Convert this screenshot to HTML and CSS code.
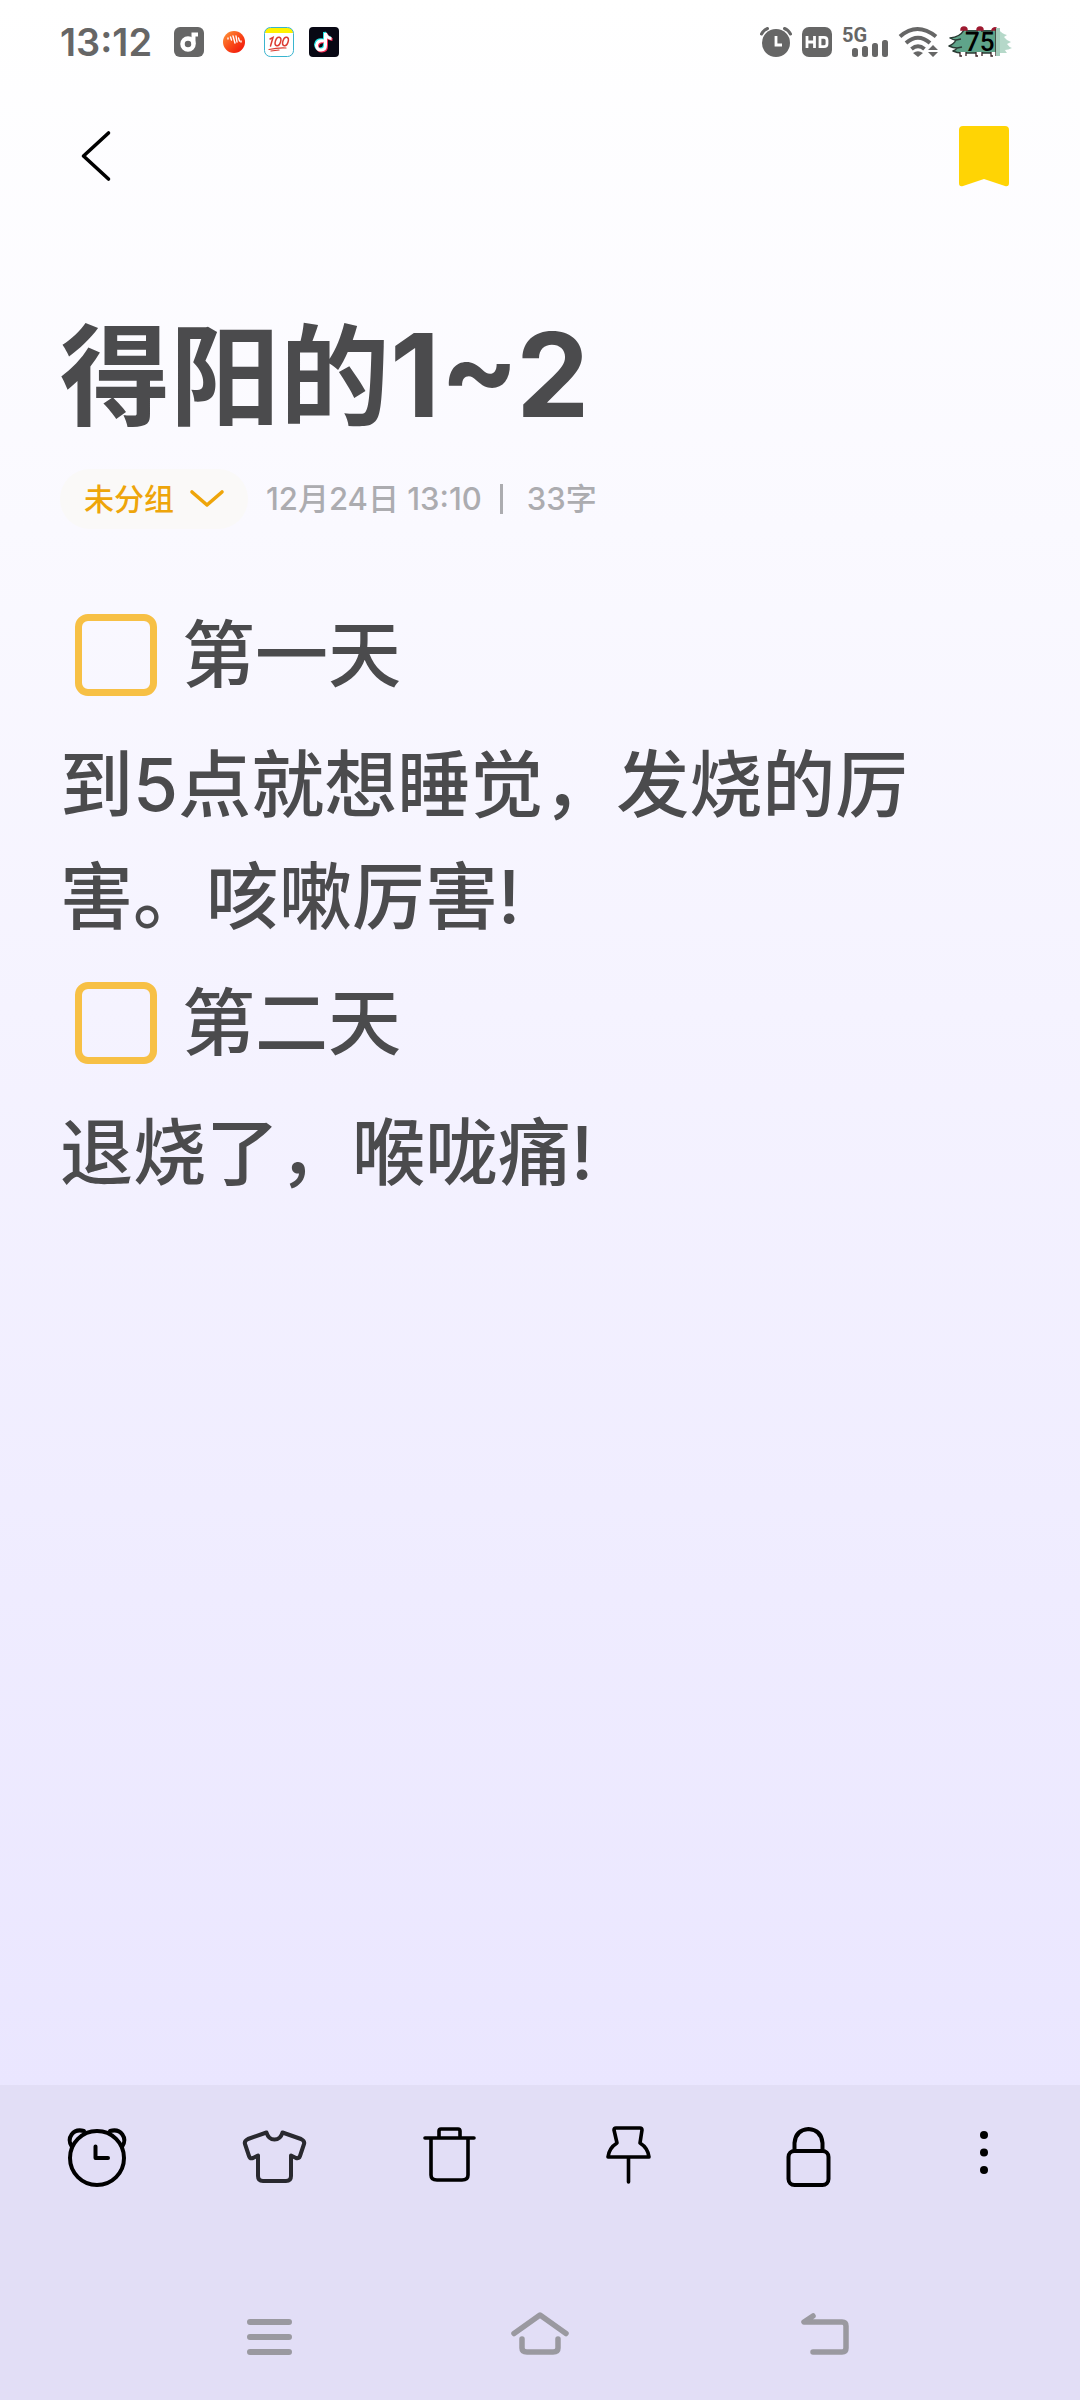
FILE: index.html
```html
<!DOCTYPE html>
<html lang="zh-CN">
<head>
<meta charset="utf-8">
<meta name="viewport" content="width=device-width, initial-scale=1">
<title>得阳的1~2</title>
<link rel="stylesheet" href="styles.css">
</head>
<body>
<div class="screen">
  <div class="status">
    <div class="status-group">
      <span class="clock">13:12</span>
      <div class="apps">
        <svg width="30" height="30" viewBox="0 0 30 30"><rect width="30" height="30" rx="6" fill="#666"/><circle cx="14" cy="17" r="5.500" fill="none" stroke="#fff" stroke-width="4.500"/><path d="M19.500 17V7.500h4.500" fill="none" stroke="#fff" stroke-width="4"/></svg>
        <svg width="30" height="30" viewBox="0 0 30 30"><defs><linearGradient id="orb" x1="0" y1="0" x2="1" y2="1"><stop offset="0" stop-color="#ff9a3c"/><stop offset=".5" stop-color="#f94a18"/><stop offset="1" stop-color="#f00a08"/></linearGradient></defs><circle cx="15" cy="15" r="11" fill="url(#orb)"/><path d="M9 11v1M11.500 10l1 3M14 9l2 7M17 9l1 6M19.500 11l1 3M22 14v1" stroke="#fff" stroke-width="1.400" stroke-linecap="round"/></svg>
        <svg width="30" height="30" viewBox="0 0 30 30"><rect x=".5" y=".5" width="29" height="29" rx="6" fill="#fff"/><path d="M1 6q0-5 5-5h18q5 0 5 5z" fill="#fff200"/><rect x=".5" y=".5" width="29" height="29" rx="6" fill="none" stroke="#39b4cf"/><g fill="none" stroke="#dc3c32" stroke-width="1.500" stroke-linecap="round"><path d="M6 12l3-1.500-2.500 8.500"/><ellipse cx="14" cy="14.500" rx="2.600" ry="4.400" transform="rotate(18 14 14.500)"/><ellipse cx="21.500" cy="14.500" rx="2.600" ry="4.400" transform="rotate(18 21.500 14.500)"/><path d="M5 22.500q9-2 17-1.500M7 24l8-1" stroke-width="1.200"/></g></svg>
        <svg width="30" height="30" viewBox="0 0 30 30"><rect width="30" height="30" rx="4" fill="#080814"/><g fill="none" stroke-width="3"><path d="M15 14q-7-1-7.500 4.500Q8 23 12 23q4.500 0 4.500-5V6q1 5 6 5.500" stroke="#25e5e5" transform="translate(-1 -1)"/><path d="M15 14q-7-1-7.500 4.500Q8 23 12 23q4.500 0 4.500-5V6q1 5 6 5.500" stroke="#fb3058" transform="translate(1 1)"/><path d="M15 14q-7-1-7.500 4.500Q8 23 12 23q4.500 0 4.500-5V6q1 5 6 5.500" stroke="#fff"/></g></svg>
      </div>
    </div>
    <div class="status-icons">
      <svg width="32" height="30" viewBox="0 0 32 30"><circle cx="16" cy="16" r="14" fill="#666"/><path d="M1.500 7q2-4 6-5.500M30.500 7q-2-4-6-5.500" stroke="#666" stroke-width="3" stroke-linecap="round" fill="none"/><path d="M16 9v9h6" fill="none" stroke="#fff" stroke-width="2.800"/></svg>
      <svg width="30" height="30" viewBox="0 0 30 30"><rect width="30" height="30" rx="7" fill="#666"/><path d="M5 9v12M12.500 9v12M5 15h7.500M18 10.300h4q3 0 3 3v3.400q0 3-3 3h-4z" fill="none" stroke="#fff" stroke-width="2.800"/></svg>
      <div class="network">
        <span class="network-type">5G</span>
        <svg class="bars" width="36" height="17" viewBox="0 0 36 17" fill="#666"><rect x="0" y="8" width="6" height="9" rx="2.500"/><rect x="10" y="6" width="6" height="11" rx="2.500"/><rect x="20" y="3" width="6" height="14" rx="2.500"/><rect x="30" y="0" width="6" height="17" rx="2.500"/></svg>
      </div>
      <svg width="40" height="30" viewBox="0 0 40 30"><g fill="none" stroke="#666" stroke-width="4"><path d="M2 9.500q17-15 36 0"/><path d="M8 16q12-10.500 24 0"/><path d="M13.500 22q6.500-5.500 13 0"/></g><path d="M15 26q5-3.500 10 0l-5 4zM30 23l5-5 5 5zM30 25l5 5 5-5z" fill="#666"/></svg>
      <div class="battery">
        <svg width="64" height="30" viewBox="0 0 64 30"><path d="M50 2q4 5 9 6l-3 2q3 4 7 5l-4 2q2 3 5 4-4 2-7 2 1 2 2 3H50z" fill="#b5d8c9"/><path d="M2 11q10-1 14-8h34v23H14q-5 0-9-2 3-1 4-3-5 0-8-2 5-2 7-5-3-1-6-3z" fill="#5fa48a"/><path d="M16 3q-4 7-14 8 3 2 6 2-2 4-7 6 4 2 8 2-1 2-4 3 4 2 9 2h36M8 13l5-1M9 21l5-1M18 4h12M33 4h12" fill="none" stroke="#2a3b34" stroke-width="1.500" stroke-linejoin="round"/><path d="M13 3a3 3 0 0 1 6 0zM29 3a3 3 0 0 1 6 0zM44 3a3 3 0 0 1 4-2v2z" fill="#9d1930" stroke="#9d1930" stroke-width="1.500"/><path d="M12 25h6v4h-6zM28 25h6v4h-6zM43 25h5v4h-5z" fill="#fff"/><path d="M12 25v4h2M18 25v4M28 25v4h2M34 25v4M43 25v4h2M48 2v27" fill="none" stroke="#3a2226" stroke-width="1.300"/><path d="M48 1h4v28h-4z" fill="#a3cbbb"/></svg>
        <span class="battery-level">75</span>
      </div>
    </div>
  </div>

  <header class="header">
    <button class="icon-button" aria-label="返回"><svg width="64" height="64" viewBox="0 0 64 64" fill="none" stroke="#000" stroke-width="3.600" stroke-linecap="round" stroke-linejoin="round"><path d="M44.500 9L19.500 32l25 23"/></svg></button>
    <button class="icon-button" aria-label="书签"><svg width="64" height="64" viewBox="0 0 64 64"><path d="M11 2h42q4 0 4 4v53q0 4-4 3L32 55 11 62q-4 1-4-3V6q0-4 4-4z" fill="#ffd404"/></svg></button>
  </header>

  <main class="note">
    <h1 class="title">得阳的<span class="title-number">1~2</span></h1>
    <div class="meta">
      <button class="group">未分组<svg width="34" height="20" viewBox="0 0 34 20" fill="none" stroke="#eea50a" stroke-width="3.600" stroke-linecap="round" stroke-linejoin="round"><path d="M2 3l15 13L32 3"/></svg></button>
      <span class="date">12月24日 13:10</span>
      <span class="divider"></span>
      <span class="count">33字</span>
    </div>
    <div class="content">
      <label class="task"><input class="check" type="checkbox">第一天</label>
      <p class="text">到5点就想睡觉，发烧的厉害。咳嗽厉害!</p>
      <label class="task"><input class="check" type="checkbox">第二天</label>
      <p class="text">退烧了，喉咙痛!</p>
    </div>
  </main>

  <footer class="footer">
    <div class="tools">
      <button class="icon-button" aria-label="提醒"><svg width="64" height="64" viewBox="0 0 64 64" fill="none" stroke="#000" stroke-width="4" stroke-linecap="round"><circle cx="33" cy="36" r="27"/><path d="M31.500 24.500V36h12.500M8 25C2 16 9 6 20 9M58 25C64 16 57 6 46 9" stroke-linejoin="round"/></svg></button>
      <button class="icon-button" aria-label="主题"><svg width="64" height="64" viewBox="0 0 64 64" fill="none" stroke="#29292f" stroke-width="4" stroke-linejoin="round"><path d="M24.500 10.500L6 17q-4 2-3 5l4 12q1 3 4 2l5-2.500V54q0 5 5 5h23q5 0 5-5V33.500l5 2.500q3 1 4-2l4-12q1-3-3-5L40.500 10.500q-2 7-8 7t-8-7z"/></svg></button>
      <button class="icon-button" aria-label="删除"><svg width="64" height="64" viewBox="0 0 64 64" fill="none" stroke="#000" stroke-width="3.600" stroke-linecap="round" stroke-linejoin="round"><path d="M6 16h49M12 17v36q0 5 6 5h25q6 0 6-5V17M20 15V9q0-2 2-2h17q2 0 2 2v6"/></svg></button>
      <button class="icon-button" aria-label="置顶"><svg width="64" height="64" viewBox="0 0 64 64" fill="none" stroke="#000" stroke-width="3.600" stroke-linecap="round" stroke-linejoin="round"><path d="M19 6h24q2 0 2 2l-2 13q8 5 9 14H11q1-9 9-14L17 8q0-2 2-2zM31.500 35v25"/></svg></button>
      <button class="icon-button" aria-label="加锁"><svg width="64" height="64" viewBox="0 0 64 64" fill="none" stroke="#000" stroke-width="4"><rect x="14.500" y="29" width="40" height="34" rx="6"/><path d="M20.500 28v-7q1-13 14-14 13 1 14 14v7"/></svg></button>
      <button class="icon-button" aria-label="更多"><svg width="64" height="64" viewBox="0 0 64 64"><circle cx="32" cy="13" r="4"/><circle cx="32" cy="30.500" r="4"/><circle cx="32" cy="48" r="4"/></svg></button>
    </div>
    <nav class="system-nav">
      <button class="icon-button" aria-label="最近任务"><svg width="96" height="64" viewBox="0 0 96 64" stroke="#9a99a0" stroke-width="6" stroke-linecap="round"><path d="M28 18h39M28 33h39M28 48h39"/></svg></button>
      <button class="icon-button" aria-label="主屏幕"><svg width="96" height="64" viewBox="0 0 96 64" fill="none" stroke="#9a99a0" stroke-width="5.500" stroke-linecap="round" stroke-linejoin="round"><path d="M22 29.500L48 11l26 18.500M30 35v9q0 4 5 4h26q5 0 5-4v-9"/></svg></button>
      <button class="icon-button" aria-label="返回上一页"><svg width="96" height="64" viewBox="0 0 96 64" fill="none" stroke="#9a99a0" stroke-width="5.500" stroke-linecap="round" stroke-linejoin="round"><path d="M51 12l-9 6h38q4 0 4 4v22q0 4-4 4H51"/></svg></button>
    </nav>
  </footer>
</div>
</body>
</html>
```
FILE: styles.css
```css
* {
  box-sizing: border-box;
}

body {
  margin: 0;
  font-family: Inter, "Noto Sans CJK SC", sans-serif;
  color: #4b4b4d;
}

button {
  margin: 0;
  padding: 0;
  border: 0;
  background: none;
  font: inherit;
  cursor: pointer;
}

svg {
  display: block;
  flex: none;
  overflow: visible;
}

.screen {
  display: flex;
  flex-direction: column;
  min-height: 100vh;
  background: linear-gradient(#ffffff 0%, #faf9ff 22%, #f5f3ff 42%, #eae6ff 87%);
}

.status {
  display: flex;
  justify-content: space-between;
  align-items: center;
  height: 84px;
  padding: 0 68px 0 60px;
}

.status-group {
  display: flex;
  align-items: center;
  gap: 22px;
}

.clock {
  font-size: 38px;
  font-weight: 600;
  color: #666;
}

.apps {
  display: flex;
  gap: 15px;
}

.status-icons {
  display: flex;
  align-items: center;
  gap: 10px;
}

.network {
  display: grid;
  width: 46px;
  height: 30px;
}

.network-type {
  grid-area: 1 / 1;
  font-family: Roboto, sans-serif;
  font-size: 20px;
  line-height: 16px;
  font-weight: 700;
  color: #666;
}

.bars {
  grid-area: 1 / 1;
  align-self: end;
  justify-self: end;
}

.battery {
  display: grid;
  align-items: center;
}

.battery svg,
.battery-level {
  grid-area: 1 / 1;
}

.battery-level {
  padding-left: 17px;
  font-family: Roboto, sans-serif;
  font-size: 26px;
  line-height: 30px;
  font-weight: 500;
  color: #000;
}

.header {
  display: flex;
  justify-content: space-between;
  padding: 40px 64px;
}

.icon-button {
  display: flex;
}

.note {
  flex: 1;
  padding: 84px 60px 0;
}

.title {
  margin: 0;
  font-size: 110px;
  line-height: 130px;
  font-weight: 700;
}

.title-number {
  font-size: 116px;
  line-height: 1;
}

.meta {
  display: flex;
  align-items: center;
  margin-top: 27px;
  font-size: 31px;
  line-height: 60px;
  font-weight: 500;
  color: #acacb0;
}

.group {
  display: flex;
  align-items: center;
  gap: 16px;
  margin-right: 18px;
  padding: 0 24px;
  border-radius: 30px;
  background: #faf9f8;
  font-size: 30px;
  color: #eea50a;
}

.divider {
  width: 3px;
  height: 30px;
  margin: 0 24px 0 18px;
  background: #acacb0;
}

.content {
  margin-top: 56px;
  font-size: 73px;
  line-height: 112px;
  font-weight: 500;
}

.task {
  display: flex;
  align-items: center;
  gap: 25px;
  height: 144px;
  padding: 0 0 4px 15px;
}

.check {
  flex: none;
  appearance: none;
  width: 82px;
  height: 82px;
  margin: 0;
  border: 7px solid #f7c045;
  border-radius: 13px;
}

.text {
  margin: 0;
}

.footer {
  padding: 37px 64px 32px;
  background: #e2def6;
}

.tools {
  display: flex;
  justify-content: space-between;
}

.system-nav {
  display: flex;
  justify-content: center;
  gap: 174px;
  padding-top: 118px;
}
```
